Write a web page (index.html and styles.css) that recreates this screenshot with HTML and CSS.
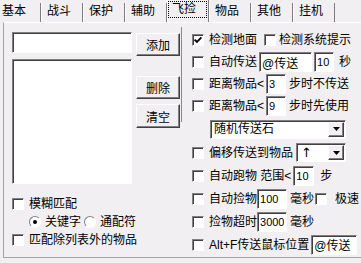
FILE: index.html
```html
<!DOCTYPE html>
<html lang="zh-CN">
<head>
    <meta charset="UTF-8">
    <title>飞捡</title>
    <link rel="stylesheet" href="styles.css">
</head>
<body>
    <div class="tabs">
        <div class="tab first">基本</div>
        <div class="tab">战斗</div>
        <div class="tab">保护</div>
        <div class="tab">辅助</div>
        <div class="tab active"><span class="focus">飞捡</span></div>
        <div class="tab">物品</div>
        <div class="tab">其他</div>
        <div class="tab">挂机</div>
    </div>

    <div class="page">
        <!-- item list -->
        <div class="left">
            <div class="list-area">
                <div class="list-col">
                    <input class="edit name-edit" type="text">
                    <div class="listbox"></div>
                </div>
                <div class="btn-col">
                    <button class="btn add">添加</button>
                    <button class="btn del">删除</button>
                    <button class="btn clr">清空</button>
                </div>
            </div>
            <div class="opt first-opt"><span class="chk"></span>模糊匹配</div>
            <div class="opt radios">
                <span class="radio on"></span><span class="r-label">关键字</span>
                <span class="radio"></span><span class="r-label">通配符</span>
            </div>
            <div class="opt"><span class="chk"></span>匹配除列表外的物品</div>
        </div>

        <div class="divider"></div>

        <!-- pickup settings -->
        <div class="settings">
            <div class="row h22">
                <span class="chk"><svg width="10" height="10" viewBox="0 0 10 10"><path d="M1.6 4.6 L4 7 L8.4 2.4" fill="none" stroke="#000" stroke-width="1.9"/></svg></span>检测地面
                <span class="chk sys"></span>检测系统提示
            </div>
            <div class="row h22">
                <span class="chk"></span>自动传送
                <input class="edit cn w53" type="text" value="@传送">
                <input class="edit w20" type="text" value="10">
                <span class="unit">秒</span>
            </div>
            <div class="row h21">
                <span class="chk"></span>距离物品&lt;
                <input class="edit w20" type="text" value="3">
                <span class="after">步时不传送</span>
            </div>
            <div class="row h23">
                <span class="chk"></span>距离物品&lt;
                <input class="edit w20" type="text" value="9">
                <span class="after">步时先使用</span>
            </div>
            <div class="row h24">
                <div class="combo w136">
                    <span class="combo-text">随机传送石</span>
                    <span class="combo-btn"><svg width="7" height="4" viewBox="0 0 7 4"><path d="M0 0 H7 L3.5 4 Z" fill="#000"/></svg></span>
                </div>
            </div>
            <div class="row h23">
                <span class="chk"></span>偏移传送到物品
                <div class="combo w50">
                    <span class="combo-text arrow">↑</span>
                    <span class="combo-btn"><svg width="7" height="4" viewBox="0 0 7 4"><path d="M0 0 H7 L3.5 4 Z" fill="#000"/></svg></span>
                </div>
            </div>
            <div class="row h23">
                <span class="chk"></span>自动跑物 范围&lt;
                <input class="edit w21" type="text" value="10">
                <span class="step">步</span>
            </div>
            <div class="row h23">
                <span class="chk"></span>自动捡物
                <input class="edit w30 tight" type="text" value="100">
                <span class="unit-ms">毫秒</span>
                <span class="chk fast"></span>极速
            </div>
            <div class="row h23">
                <span class="chk"></span>捡物超时
                <input class="edit w30 tight" type="text" value="3000">
                <span class="unit-ms">毫秒</span>
            </div>
            <div class="row h23">
                <span class="chk"></span>Alt+F传送鼠标位置
                <input class="edit cn w46" type="text" value="@传送">
            </div>
        </div>
    </div>
</body>
</html>
```

FILE: styles.css
```css
body {
    margin: 0;
    width: 361px;
    height: 263px;
    overflow: hidden;
    background-color: #f1eff1;
    color: #000;
    font-family: "Liberation Sans", "Noto Sans CJK SC", sans-serif;
    font-size: 12px;
    line-height: 14px;
}

/* tab strip */
.tabs {
    display: flex;
    height: 22px;
}

.tab {
    box-sizing: border-box;
    width: 42px;
    height: 19px;
    margin-top: 3px;
    padding-left: 5px;
    border-left: 1px solid #fff;
    border-right: 1px solid #7c7c7c;
    line-height: 16px;
}

.tab.first {
    width: 41px;
    padding-left: 2px;
    border-left: 0;
}

.tab.active {
    height: 22px;
    margin-top: 0;
    padding-left: 0;
}

.focus {
    display: inline-block;
    margin-top: 1px;
    padding: 0 10px 0 3px;
    border: 1px dotted #000;
    line-height: 15px;
}

/* page */
.page {
    display: flex;
    height: 234px;
    margin-left: 3px;
    border-top: 1px solid #fff;
    border-left: 1px solid #a4a4a4;
    border-bottom: 1px solid #a4a4a4;
}

.left {
    box-sizing: border-box;
    width: 177px;
    padding: 9px 0 0 8px;
}

.divider {
    width: 1px;
    height: 95px;
    margin-top: 4px;
    background-color: #8a8a8a;
}

.list-area {
    display: flex;
    gap: 4px;
}

.list-col {
    display: flex;
    flex-direction: column;
    width: 120px;
}

.edit {
    box-sizing: border-box;
    height: 20px;
    margin: 0;
    padding: 0 2px;
    border: 1px solid;
    border-color: #808080 #fff #fff #808080;
    box-shadow: inset 1px 1px #404040;
    background-color: #fff;
    font-family: "Liberation Sans", "Noto Sans CJK SC", sans-serif;
    font-size: 11px;
    color: #000;
    outline: none;
}

.edit.cn {
    font-size: 12px;
}

.name-edit {
    width: 120px;
    height: 21px;
}

.listbox {
    box-sizing: border-box;
    height: 125px;
    margin-top: 6px;
    border: 1px solid;
    border-color: #808080 #fff #fff #808080;
    box-shadow: inset 1px 1px #404040;
    background-color: #fff;
}

.btn-col {
    display: flex;
    flex-direction: column;
    width: 44px;
}

.btn {
    box-sizing: border-box;
    width: 44px;
    height: 23px;
    padding: 0;
    border: 1px solid;
    border-color: #fff #404040 #404040 #fff;
    box-shadow: inset -1px -1px #808080;
    background-color: #f1eff1;
    font-family: inherit;
    font-size: 12px;
    color: #000;
}

.add { margin-top: 1px; }
.del { margin-top: 20px; }
.clr { margin-top: 5px; height: 24px; }

.opt {
    display: flex;
    align-items: center;
    height: 18px;
}

.first-opt {
    margin-top: 11px;
}

.radios {
    padding-left: 17px;
}

.radio {
    position: relative;
    box-sizing: border-box;
    width: 12px;
    height: 12px;
    border: 1px solid;
    border-color: #808080 #fff #fff #808080;
    border-radius: 50%;
    background-color: #fff;
    flex: none;
}

.radio.on::after {
    content: "";
    position: absolute;
    left: 3px;
    top: 3px;
    width: 4px;
    height: 4px;
    border-radius: 50%;
    background-color: #000;
}

.r-label {
    margin: 0 3px 0 4px;
}

.chk {
    display: flex;
    align-items: center;
    justify-content: center;
    box-sizing: border-box;
    width: 12px;
    height: 12px;
    margin-right: 5px;
    border: 1px solid;
    border-color: #808080 #fff #fff #808080;
    box-shadow: inset 1px 1px #404040;
    background-color: #fff;
    flex: none;
}

.chk svg {
    display: block;
}

/* right column */
.settings {
    margin-left: 10px;
    padding-top: 6px;
}

.row {
    display: flex;
    align-items: center;
    white-space: nowrap;
}

.h21 { height: 21px; }
.h22 { height: 22px; }
.h23 { height: 23px; }
.h24 { height: 24px; }

.chk.sys {
    margin-left: 7px;
    margin-right: 3px;
}

.w20 { width: 20px; margin-left: 2px; }
.w21 { width: 21px; margin-left: 2px; }
.w30 { width: 30px; }
.w46 { width: 46px; margin-left: 2px; }
.w53 { width: 53px; margin-left: 2px; }

.unit { margin-left: 5px; }
.after { margin-left: 3px; }
.step { margin-left: 6px; }
.unit-ms { margin-left: 3px; }

.chk.fast {
    margin-left: 1px;
    margin-right: 8px;
}

.combo {
    display: flex;
    box-sizing: border-box;
    height: 19px;
    padding: 1px;
    border: 1px solid;
    border-color: #808080 #fff #fff #808080;
    box-shadow: inset 1px 1px #404040;
    background-color: #fff;
}

.combo.w136 {
    width: 136px;
    margin-left: 18px;
}

.combo.w50 {
    width: 50px;
    margin-left: 3px;
}

.combo-text {
    flex: 1;
    padding-left: 2px;
    line-height: 15px;
}

.combo-text.arrow {
    font-family: "DejaVu Sans", sans-serif;
    font-size: 13px;
    padding-left: 3px;
}

.combo-btn {
    display: flex;
    align-items: center;
    justify-content: center;
    box-sizing: border-box;
    width: 16px;
    border: 1px solid;
    border-color: #fff #404040 #404040 #fff;
    box-shadow: inset -1px -1px #808080;
    background-color: #f1eff1;
}
```
